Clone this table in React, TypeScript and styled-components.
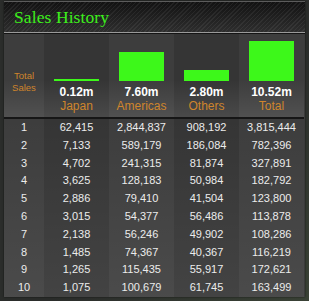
import React from "react";
import styled, { createGlobalStyle } from "styled-components";

const Global = createGlobalStyle`
  html, body { margin: 0; padding: 0; }
  body {
    background: radial-gradient(circle at 100% 100%, #3a4236 0%, #2b2d2b 60%) #2b2d2b;
    width: 309px; height: 301px; overflow: hidden;
    font-family: "Liberation Sans", Arial, sans-serif;
  }
`;

const Panel = styled.div`
  margin: 1px 0 0 4px;
  width: 301px;
  background: #3b3b3b;
  box-shadow: 0 0 2px rgba(0,0,0,0.6);
`;

const Header = styled.div`
  height: 30px;
  border-top: 1px solid #5c5c5c;
  border-bottom: 1px solid #9a9a9a;
  box-shadow: 0 1px 0 #141414;
  background:
    repeating-linear-gradient(135deg, rgba(255,255,255,0.06) 0 1px, transparent 1px 3px),
    linear-gradient(#121212, #2e2e2e);
  display: flex;
  align-items: center;
  padding-left: 10px;
`;

const Title = styled.h1`
  margin: 0;
  font-family: "Liberation Serif", "Times New Roman", serif;
  font-weight: normal;
  font-size: 17.5px;
  color: #3df01c;
  letter-spacing: 0.1px;
`;

const Grid = styled.div`
  display: grid;
  grid-template-columns: 40px repeat(4, 65px);
  margin-top: 1px;
`;

const Column = styled.div<{ $dark: boolean }>`
  display: flex;
  flex-direction: column;
  background: ${(p) => (p.$dark ? "#353535" : "#3d3d3d")};
`;

const ChartCell = styled.div`
  height: 83px;
  border-bottom: 2px solid #161616;
  display: flex;
  flex-direction: column;
  align-items: center;
  background: linear-gradient(to bottom, rgba(255,255,255,0) 55%, rgba(255,255,255,0.1) 100%);
`;

const BarArea = styled.div`
  height: 47px;
  width: 45px;
  display: flex;
  align-items: flex-end;
`;

const Bar = styled.div`
  width: 45px;
  background: #3df81a;
`;

const Value = styled.div`
  margin-top: 4px;
  font-size: 12px;
  font-weight: bold;
  line-height: 14px;
  color: #ffffff;
`;

const Name = styled.div`
  font-size: 12px;
  line-height: 15px;
  color: #cf852c;
`;

const TotalLabel = styled.div`
  margin-top: 36px;
  font-size: 9.5px;
  line-height: 12px;
  color: #cf852c;
  text-align: center;
`;

const Cell = styled.div`
  height: 17.8px;
  line-height: 17.8px;
  text-align: center;
  font-size: 11px;
  color: #ececec;
`;

const Body = styled.div`
  background: linear-gradient(to bottom, rgba(255,255,255,0) 0%, rgba(255,255,255,0.07) 100%);
`;

type Region = { name: string; total: number; rows: number[] };

const regions: Region[] = [
  { name: "Japan", total: 0.12, rows: [62415, 7133, 4702, 3625, 2886, 3015, 2138, 1485, 1265, 1075] },
  { name: "Americas", total: 7.6, rows: [2844837, 589179, 241315, 128183, 79410, 54377, 56246, 74367, 115435, 100679] },
  { name: "Others", total: 2.8, rows: [908192, 186084, 81874, 50984, 41504, 56486, 49902, 40367, 55917, 61745] },
  { name: "Total", total: 10.52, rows: [3815444, 782396, 327891, 182792, 123800, 113878, 108286, 116219, 172621, 163499] },
];

const maxTotal = 10.52;
const fmt = (n: number) => n.toLocaleString("en-US");

export default function App() {
  return (
    <>
      <Global />
      <Panel>
        <Header>
          <Title>Sales History</Title>
        </Header>
        <Grid>
          <Column $dark={false}>
            <ChartCell>
              <TotalLabel>Total<br />Sales</TotalLabel>
            </ChartCell>
            <Body>
              {Array.from({ length: 10 }, (_, i) => (
                <Cell key={i}>{i + 1}</Cell>
              ))}
            </Body>
          </Column>
          {regions.map((r, ci) => (
            <Column key={r.name} $dark={ci % 2 === 0}>
              <ChartCell>
                <BarArea>
                  <Bar style={{ height: `${Math.max(2, Math.round((r.total / maxTotal) * 40))}px` }} />
                </BarArea>
                <Value>{r.total.toFixed(2)}m</Value>
                <Name>{r.name}</Name>
              </ChartCell>
              <Body>
                {r.rows.map((v, i) => (
                  <Cell key={i}>{fmt(v)}</Cell>
                ))}
              </Body>
            </Column>
          ))}
        </Grid>
      </Panel>
    </>
  );
}
